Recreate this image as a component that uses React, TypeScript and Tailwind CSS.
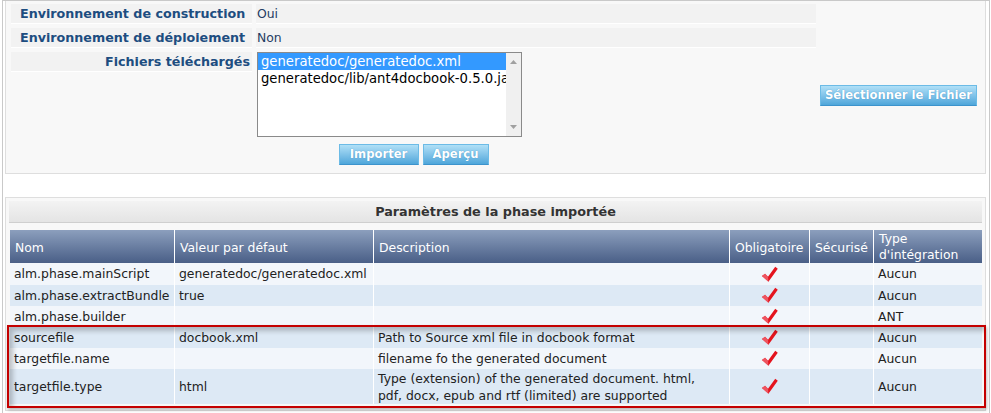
import React from "react";

interface Param {
  nom: string;
  valeur: string;
  description: React.ReactNode;
  obligatoire: boolean;
  type: string;
  tall?: boolean;
}

const params: Param[] = [
  { nom: "alm.phase.mainScript", valeur: "generatedoc/generatedoc.xml", description: "", obligatoire: true, type: "Aucun" },
  { nom: "alm.phase.extractBundle", valeur: "true", description: "", obligatoire: true, type: "Aucun" },
  { nom: "alm.phase.builder", valeur: "", description: "", obligatoire: true, type: "ANT" },
  { nom: "sourcefile", valeur: "docbook.xml", description: "Path to Source xml file in docbook format", obligatoire: true, type: "Aucun" },
  { nom: "targetfile.name", valeur: "", description: "filename fo the generated document", obligatoire: true, type: "Aucun" },
  {
    nom: "targetfile.type",
    valeur: "html",
    description: (
      <>
        Type (extension) of the generated document. html,
        <br />
        pdf, docx, epub and rtf (limited) are supported
      </>
    ),
    obligatoire: true,
    type: "Aucun",
    tall: true,
  },
];

const Check = () => (
  <svg width="17" height="17" viewBox="0 0 16 16" className="mx-auto block">
    <path d="M0.8 9.4 L3.8 7.2 L6.6 10.2 L13.4 0.8 L15.8 2.6 L7 14.8 Z" fill="#e4141e" />
    <path d="M0.8 9.4 L3.8 7.2 L6.6 10.2 L7 14.8 Z" fill="#f0606c" opacity="0.85" />
  </svg>
);

const Button = ({ children, className = "" }: { children: React.ReactNode; className?: string }) => (
  <button
    className={
      "h-[21px] whitespace-nowrap border border-[#6cbbe6] border-b-[#3c93cc] bg-gradient-to-b from-[#b0e0f7] to-[#4ea6da] text-[11.6px] font-bold leading-[19px] text-white [text-shadow:0_0_1px_#3a8cc0] " +
      className
    }
  >
    {children}
  </button>
);

export default function App() {
  return (
    <div className="relative h-[413px] w-[991px] overflow-hidden bg-white font-['DejaVu_Sans',sans-serif] text-[12.4px]">
      <div className="ml-[2px] h-[420px] w-[988px] border-x border-t border-[#c9c9c9] pl-[2px]">
        {/* top panel */}
        <div className="h-[173px] w-[981px] border border-t-0 border-[#dedede] bg-[#f8f8f8] pl-[5px] pt-[3px]">
          <div className="flex">
            <div className="flex w-[805px] flex-col gap-[4px]">
              <div className="flex gap-[4px]">
                <div className="h-[20px] w-[241px] border-b border-white bg-[#f2f2f2] pl-[9px] text-[12.7px] font-bold leading-[19px] text-[#1d4d80]">
                  Environnement de construction
                </div>
                <div className="h-[20px] flex-1 border-b border-white bg-[#f2f2f2] pl-[1px] leading-[19px] text-[#1f3d63]">
                  Oui
                </div>
              </div>
              <div className="flex gap-[4px]">
                <div className="h-[20px] w-[241px] border-b border-white bg-[#f2f2f2] pl-[9px] text-[12.7px] font-bold leading-[19px] text-[#1d4d80]">
                  Environnement de déploiement
                </div>
                <div className="h-[20px] flex-1 border-b border-white bg-[#f2f2f2] pl-[1px] leading-[19px] text-[#1f3d63]">
                  Non
                </div>
              </div>
              <div className="flex gap-[4px]">
                <div className="h-[20px] w-[241px] border-b border-white bg-[#f2f2f2] pr-[2px] text-right text-[12.7px] font-bold leading-[19px] text-[#1d4d80]">
                  Fichiers téléchargés
                </div>
                <div className="flex-1 pl-[1px]">
                  <div className="flex h-[85px] w-[265px] border border-[#8a8a8a] bg-white text-[13.2px]">
                    <div className="flex-1 overflow-hidden whitespace-nowrap">
                      <div className="h-[17px] bg-[#3399ff] pl-[3px] leading-[17px] text-white">generatedoc/generatedoc.xml</div>
                      <div className="h-[17px] pl-[3px] leading-[17px] text-black">generatedoc/lib/ant4docbook-0.5.0.jar</div>
                    </div>
                    <div className="flex w-[15px] flex-col items-center justify-between bg-[#f0f0f0] py-[7px]">
                      <svg width="7" height="4" viewBox="0 0 7 4">
                        <path d="M0 4 L3.5 0 L7 4 Z" fill="#a0a0a0" />
                      </svg>
                      <svg width="7" height="4" viewBox="0 0 7 4">
                        <path d="M0 0 L3.5 4 L7 0 Z" fill="#a0a0a0" />
                      </svg>
                    </div>
                  </div>
                </div>
              </div>
            </div>
            <div className="flex items-end pb-[31px] pl-[4px]">
              <Button className="w-[157px]">Sélectionner le Fichier</Button>
            </div>
          </div>
          <div className="mt-[7px] flex w-[805px] justify-center gap-[4px]">
            <Button className="w-[80px]">Importer</Button>
            <Button className="w-[66px]">Aperçu</Button>
          </div>
        </div>

        {/* parameters panel */}
        <div className="mt-[23px] h-[214px] w-[981px] border border-[#dedede] bg-[#f8f8f8] p-[3px]">
          <div className="h-[22px] w-[973px] border-b border-[#cfcfcf] bg-gradient-to-b from-[#f3f3f3] to-[#e4e4e4] text-center text-[12.8px] font-bold leading-[21px] text-[#333]">
            Paramètres de la phase importée
          </div>
          <table className="ml-[1px] mt-[7px] w-[972px] table-fixed border-separate border-spacing-0 text-[#222]">
            <colgroup>
              <col className="w-[165px]" />
              <col className="w-[199px]" />
              <col className="w-[356px]" />
              <col className="w-[80px]" />
              <col className="w-[64px]" />
              <col className="w-[108px]" />
            </colgroup>
            <thead>
              <tr className="h-[33px] bg-gradient-to-b from-[#8c9fbd] to-[#4a5f87] text-left font-normal leading-[16px] text-white">
                <th className="border-r border-white px-[5px] pt-[2px] font-normal">Nom</th>
                <th className="border-r border-white px-[5px] pt-[2px] font-normal">Valeur par défaut</th>
                <th className="border-r border-white px-[5px] pt-[2px] font-normal">Description</th>
                <th className="border-r border-white px-[5px] pt-[2px] font-normal">Obligatoire</th>
                <th className="border-r border-white px-[5px] pt-[2px] font-normal">Sécurisé</th>
                <th className="px-[5px] font-normal">
                  Type
                  <br />
                  d'intégration
                </th>
              </tr>
            </thead>
            <tbody>
              {params.map((p, i) => (
                <tr
                  key={p.nom}
                  className={(i % 2 === 0 ? "bg-[#f2f6fb] " : "bg-[#dde9f5] ") + (p.tall ? "h-[35px]" : i === 0 ? "h-[22px]" : "h-[21px]")}
                >
                  <td className="border-r border-white px-[4px] leading-[16px]">{p.nom}</td>
                  <td className="border-r border-white px-[4px] leading-[16px]">{p.valeur}</td>
                  <td className="border-r border-white px-[4px] leading-[17px]">{p.description}</td>
                  <td className="border-r border-white">{p.obligatoire && <Check />}</td>
                  <td className="border-r border-white"></td>
                  <td className="px-[4px] leading-[16px]">{p.type}</td>
                </tr>
              ))}
            </tbody>
          </table>
        </div>
      </div>

      {/* annotation highlight */}
      <div className="pointer-events-none absolute left-[7px] top-[325px] h-[83px] w-[979px] border-2 border-[#c40000] shadow-[inset_4px_4px_5px_rgba(0,0,0,0.22),1px_2px_3px_rgba(0,0,0,0.25)]"></div>
    </div>
  );
}
